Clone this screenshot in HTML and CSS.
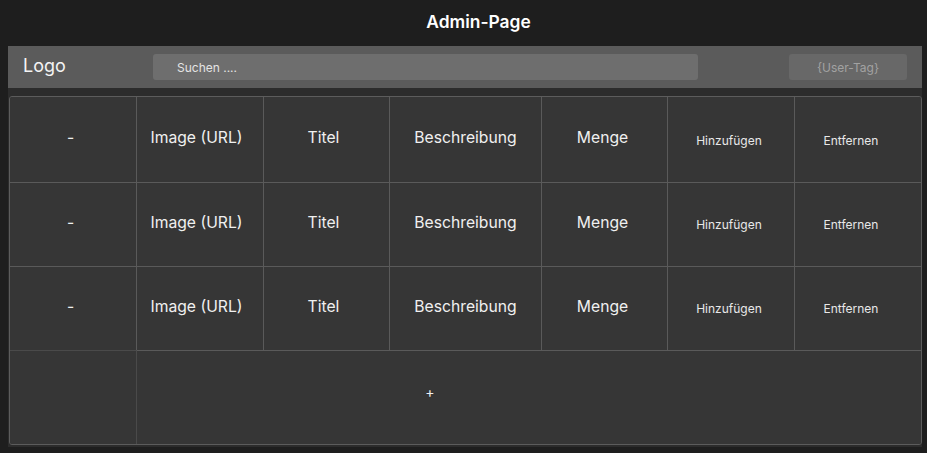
FILE: index.html
```html
<!DOCTYPE html>
<html lang="de">
<head>
<meta charset="utf-8">
<title>Admin-Page</title>
<link rel="stylesheet" href="styles.css">
</head>
<body>
<h1 class="title">Admin-Page</h1>
<div class="panel">
  <header class="topbar">
    <div class="logo">Logo</div>
    <div class="search">Suchen ....</div>
    <div class="usertag">{User-Tag}</div>
  </header>
  <div class="panel-body">
    <div class="table">
      <div class="cell big c1 r1">-</div>
      <div class="cell big c2 r1">Image (URL)</div>
      <div class="cell big c3 r1">Titel</div>
      <div class="cell big c4 r1">Beschreibung</div>
      <div class="cell big c5 r1">Menge</div>
      <div class="cell small c6 r1">Hinzufügen</div>
      <div class="cell small c7 r1">Entfernen</div>

      <div class="cell big c1">-</div>
      <div class="cell big c2">Image (URL)</div>
      <div class="cell big c3">Titel</div>
      <div class="cell big c4">Beschreibung</div>
      <div class="cell big c5">Menge</div>
      <div class="cell small c6">Hinzufügen</div>
      <div class="cell small c7">Entfernen</div>

      <div class="cell big c1">-</div>
      <div class="cell big c2">Image (URL)</div>
      <div class="cell big c3">Titel</div>
      <div class="cell big c4">Beschreibung</div>
      <div class="cell big c5">Menge</div>
      <div class="cell small c6">Hinzufügen</div>
      <div class="cell small c7">Entfernen</div>

      <div class="cell foot-empty"></div>
      <div class="cell add">+</div>
    </div>
  </div>
</div>
</body>
</html>
```

FILE: styles.css
```css
* { box-sizing: border-box; }

html, body {
  margin: 0;
  padding: 0;
  background: #1e1e1e;
  font-family: Inter, "Noto Sans", "Liberation Sans", sans-serif;
  color: #f2f2f2;
}

body {
  width: 927px;
  height: 453px;
  overflow: hidden;
}

.title {
  margin: 0;
  height: 46px;
  display: flex;
  align-items: center;
  justify-content: center;
  font-size: 17.4px;
  font-weight: 600;
  color: #ffffff;
  padding-bottom: 4px;
  padding-left: 30px;
}

.panel {
  margin-left: 8px;
  width: 914px;
}

.topbar {
  height: 42px;
  background: #5b5b5b;
  display: flex;
  align-items: center;
}

.logo {
  width: 145px;
  padding-left: 15px;
  font-size: 18px;
  color: #f4f4f4;
  padding-bottom: 3px;
}

.search {
  width: 545px;
  height: 26px;
  background: #6e6e6e;
  border-radius: 3px;
  font-size: 12px;
  color: #e4e4e4;
  padding-left: 24px;
  display: flex;
  align-items: center;
}

.usertag {
  margin-left: 91px;
  width: 118px;
  height: 26px;
  background: #686868;
  border-radius: 3px;
  font-size: 12px;
  color: #a2a2a2;
  display: flex;
  align-items: center;
  justify-content: center;
}

.panel-body {
  background: #2c2c2c;
  padding: 8px 0 2px 1px;
}

.table {
  width: 913px;
  display: grid;
  grid-template-columns: 127px 127px 126px 152px 126px 127px 126px;
  grid-template-rows: 86px 84px 84px 93px;
  border: 1px solid #5c5c5c;
  border-radius: 3px;
  background: #363636;
  overflow: hidden;
}

.cell {
  background: #363636;
  border-right: 1px solid #5a5a5a;
  border-bottom: 1px solid #5a5a5a;
  display: flex;
  align-items: center;
  justify-content: center;
  color: #f0f0f0;
}

.big {
  font-size: 15.7px;
  padding-bottom: 4px;
}

.small {
  font-size: 12px;
  color: #e8e8e8;
}

.small.r1 { padding-top: 2px; }

.c1 { padding-right: 5px; }
.c2 { padding-right: 7px; }
.c3 { padding-right: 6px; }
.c5 { padding-right: 4px; }
.c6 { padding-right: 4px; }
.c7 {
  border-right: none;
  padding-right: 14px;
}

.foot-empty {
  border-bottom: none;
  border-right-color: #4a4a4a;
  border-top: 1px solid #4a4a4a;
  margin-top: -1px;
}

.add {
  grid-column: 2 / 8;
  border-right: none;
  border-bottom: none;
  font-size: 14px;
  padding-right: 198px;
  padding-bottom: 12px;
}
```
